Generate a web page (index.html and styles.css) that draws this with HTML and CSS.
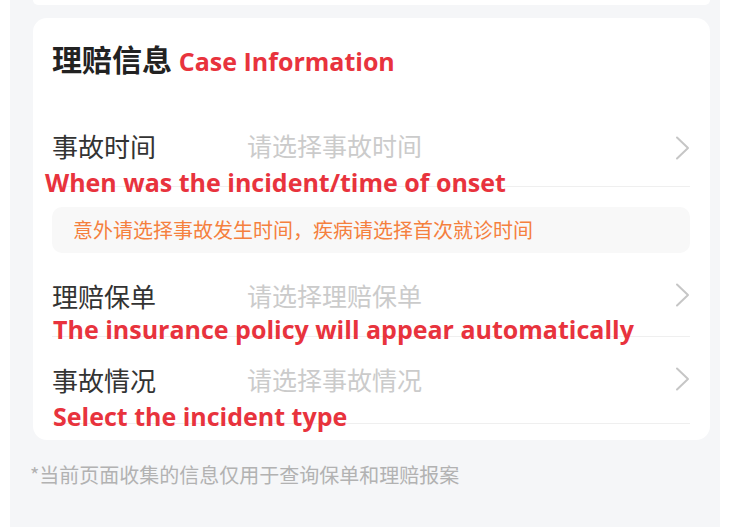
FILE: index.html
```html
<!DOCTYPE html>
<html lang="zh-CN">
<head>
<meta charset="utf-8">
<title>理赔信息</title>
<link rel="stylesheet" href="styles.css">
</head>
<body>
<div class="page">
  <div class="prev-card"></div>
  <section class="card">
    <h2 class="title">理赔信息 <span class="en">Case Information</span></h2>

    <div class="row row-first">
      <div class="item">
        <span class="label">事故时间</span>
        <span class="ph">请选择事故时间</span>
        <svg class="chev" width="15" height="24" viewBox="0 0 15 24"><polyline points="2,1.5 13,12 2,22.5" fill="none" stroke="#c6c6c6" stroke-width="2" stroke-linecap="round" stroke-linejoin="round"/></svg>
      </div>
      <div class="note note-first">When was the incident/time of onset</div>
    </div>

    <div class="hint">意外请选择事故发生时间，疾病请选择首次就诊时间</div>

    <div class="row">
      <div class="item">
        <span class="label">理赔保单</span>
        <span class="ph">请选择理赔保单</span>
        <svg class="chev" width="15" height="24" viewBox="0 0 15 24"><polyline points="2,1.5 13,12 2,22.5" fill="none" stroke="#c6c6c6" stroke-width="2" stroke-linecap="round" stroke-linejoin="round"/></svg>
      </div>
      <div class="note">The insurance policy will appear automatically</div>
    </div>

    <div class="row">
      <div class="item">
        <span class="label">事故情况</span>
        <span class="ph">请选择事故情况</span>
        <svg class="chev" width="15" height="24" viewBox="0 0 15 24"><polyline points="2,1.5 13,12 2,22.5" fill="none" stroke="#c6c6c6" stroke-width="2" stroke-linecap="round" stroke-linejoin="round"/></svg>
      </div>
      <div class="note note-last">Select the incident type</div>
    </div>
  </section>

  <p class="footer">*当前页面收集的信息仅用于查询保单和理赔报案</p>
</div>
</body>
</html>
```

FILE: styles.css
```css
html, body {
  margin: 0;
  padding: 0;
  background: #ffffff;
}

body {
  font-family: "Noto Sans CJK SC", "Noto Sans", sans-serif;
}

.page {
  margin-left: 10px;
  width: 710px;
  height: 527px;
  background: #f5f6f8;
  overflow: hidden;
}

.prev-card {
  height: 5px;
  margin: 0 10px 0 23px;
  background: #ffffff;
  border-radius: 0 0 14px 14px;
}

.card {
  margin: 13px 10px 0 23px;
  background: #ffffff;
  border-radius: 14px;
  padding: 20px 20px 16px 19px;
}

.title {
  margin: 0;
  height: 40px;
  line-height: 40px;
  font-size: 30px;
  font-weight: 700;
  color: #222222;
  white-space: nowrap;
}

.title .en {
  font-family: "Open Sans", sans-serif;
  font-size: 25px;
  font-weight: 700;
  color: #e8333d;
}

.row {
  border-bottom: 1px solid #efefef;
  margin-top: 24px;
}

.row-first {
  margin-top: 49px;
}

.item {
  display: flex;
  align-items: center;
  height: 36px;
}

.label {
  width: 195px;
  flex: none;
  font-size: 26px;
  color: #333333;
  white-space: nowrap;
}

.ph {
  flex: 1;
  font-size: 25px;
  color: #cbcbcb;
  white-space: nowrap;
}

.chev {
  flex: none;
  display: block;
}

.row-first .chev {
  margin-top: 6px;
}

.note {
  margin: 1px 0 -8px 1px;
  height: 30px;
  line-height: 30px;
  font-family: "Open Sans", sans-serif;
  font-size: 25px;
  font-weight: 700;
  color: #e8333d;
  white-space: nowrap;
}

.note-first {
  margin-left: -7px;
  margin-top: 4px;
  margin-bottom: -11px;
}

.note-last {
  margin-top: 4px;
}

.hint {
  margin-top: 20px;
  height: 46px;
  line-height: 46px;
  padding-left: 21px;
  background: #f8f8f8;
  border-radius: 10px;
  font-size: 20px;
  color: #f5803e;
  white-space: nowrap;
}

.footer {
  margin: 23px 0 0 20px;
  line-height: 24px;
  font-size: 20px;
  color: #b2b2b2;
  white-space: nowrap;
}
```
